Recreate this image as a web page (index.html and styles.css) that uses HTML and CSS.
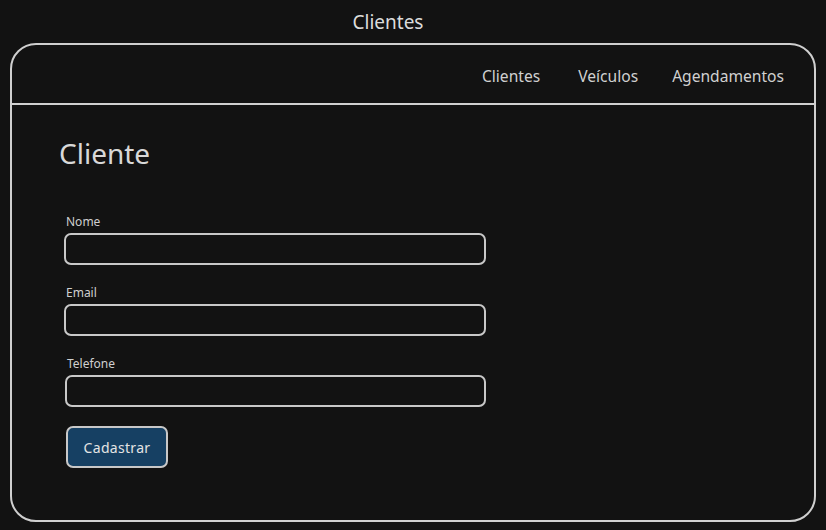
FILE: index.html
```html
<!DOCTYPE html>
<html lang="pt">
<head>
<meta charset="utf-8">
<title>Clientes</title>
<link rel="stylesheet" href="styles.css">
</head>
<body>
<div class="page-title">Clientes</div>
<div class="frame">
  <header class="topbar">
    <nav class="nav">
      <a class="nav-link nav-first">Clientes</a>
      <a class="nav-link">Veículos</a>
      <a class="nav-link">Agendamentos</a>
    </nav>
  </header>
  <main class="content">
    <h1 class="heading">Cliente</h1>
    <form class="form">
      <div class="field">
        <label class="label">Nome</label>
        <div class="input"></div>
      </div>
      <div class="field">
        <label class="label">Email</label>
        <div class="input"></div>
      </div>
      <div class="field field-shift">
        <label class="label">Telefone</label>
        <div class="input"></div>
      </div>
      <button type="button" class="btn">Cadastrar</button>
    </form>
  </main>
</div>
</body>
</html>
```

FILE: styles.css
```css
* { box-sizing: border-box; }
html, body { margin: 0; padding: 0; }
body {
  background: #121212;
  color: #d4d4d4;
  font-family: "Noto Sans", "Open Sans", sans-serif;
  width: 826px;
  height: 530px;
  overflow: hidden;
}
.page-title {
  height: 43px;
  text-align: center;
  font-size: 19px;
  line-height: 18px;
  padding-top: 13px;
  padding-right: 50px;
  color: #dcdcdc;
}
.frame {
  margin: 0 10px;
  height: 479px;
  border: 2px solid #cfcfcf;
  border-radius: 26px;
  display: flex;
  flex-direction: column;
}
.topbar {
  height: 60px;
  border-bottom: 2px solid #d0d0d0;
  margin: 0 -2px;
  display: flex;
  align-items: center;
  justify-content: flex-end;
  padding-right: 32px;
}
.nav {
  display: flex;
  gap: 34px;
  padding-top: 4px;
}
.nav-first { margin-right: 4px; }
.nav-link {
  font-size: 15.6px;
  color: #d0d0d0;
}
.content {
  padding: 30px 0 0 47px;
}
.heading {
  margin: 0;
  font-weight: 400;
  font-size: 28px;
  line-height: 36px;
  color: #d8d8d8;
}
.form {
  margin-top: 43px;
  display: flex;
  flex-direction: column;
  width: 422px;
  margin-left: 5px;
}
.field {
  display: flex;
  flex-direction: column;
  margin-bottom: 20px;
}
.field-shift { margin-left: 1px; }
.label {
  font-size: 12px;
  line-height: 16px;
  margin: 0 0 3px 2px;
  color: #cfcfcf;
}
.input {
  height: 32px;
  border: 2px solid #c8c8c8;
  border-radius: 7px;
}
.btn {
  align-self: flex-start;
  margin-left: 2px;
  margin-top: -1px;
  width: 102px;
  height: 42px;
  background: #164063;
  border: 2px solid #c8c8c8;
  border-radius: 7px;
  color: #e4e4e4;
  font-family: "Noto Sans", sans-serif;
  font-size: 14px;
  letter-spacing: 0.3px;
  padding: 0;
}
```
